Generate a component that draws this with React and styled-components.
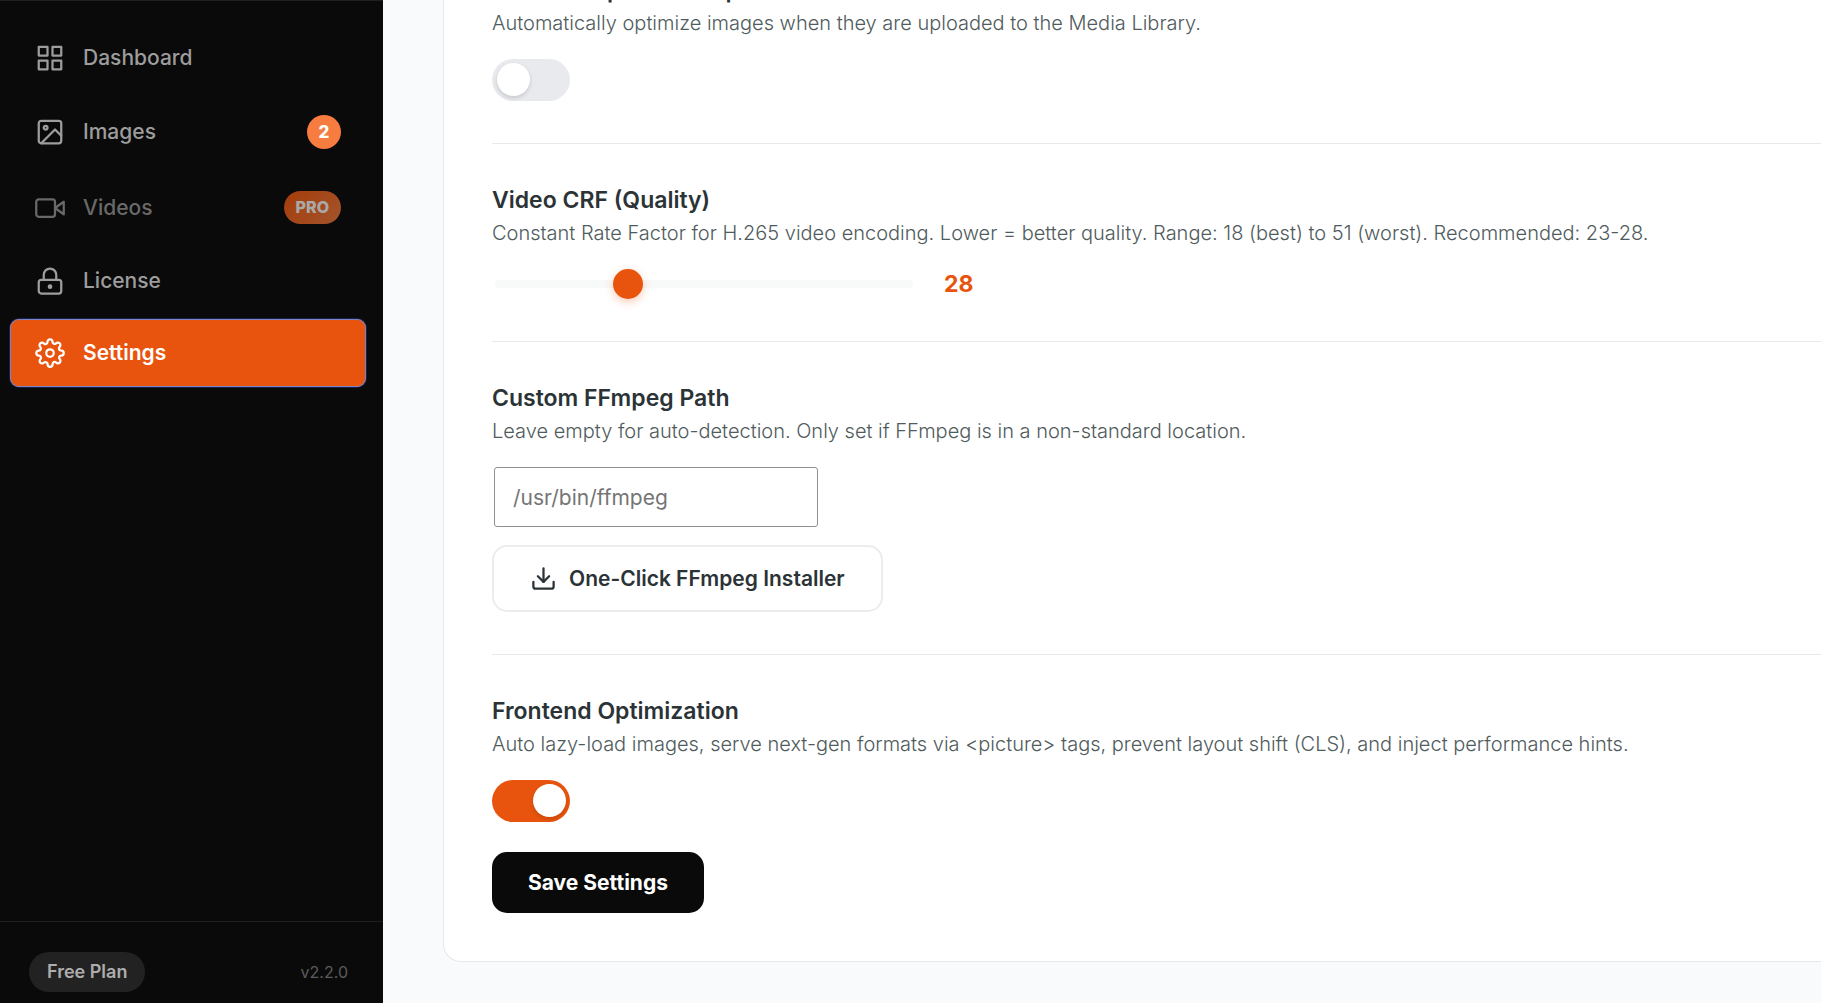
import React, { useState } from "react";
import styled, { createGlobalStyle, css } from "styled-components";
import { FiDownload, FiGrid, FiImage, FiSettings, FiVideo } from "react-icons/fi";

const colors = {
  accent: "#e8540d",
  ink: "#2b3336",
  muted: "#4f5b5c",
  line: "#e7e9ea",
  black: "#0a0a0a",
};

const GlobalStyle = createGlobalStyle`
  * {
    box-sizing: border-box;
  }

  body {
    margin: 0;
    background: #f8fafc;
    color: ${colors.ink};
    font-family: Inter, "Liberation Sans", sans-serif;
  }

  button,
  input {
    font-family: inherit;
  }
`;

const Page = styled.div`
  display: flex;
  min-height: 100vh;
  overflow: hidden;
`;

const Sidebar = styled.aside`
  display: flex;
  flex-direction: column;
  flex: 0 0 383px;
  border-top: 1px solid #1f1f1f;
  background: ${colors.black};
`;

const Nav = styled.nav`
  display: flex;
  flex-direction: column;
  flex: 1;
  gap: 4px;
  padding: 23px 17px 23px 10px;
`;

const NavLink = styled.a`
  display: flex;
  align-items: center;
  gap: 18px;
  padding: 19px 25px;
  border-radius: 9px;
  color: #9d9d9d;
  font-size: 21px;
  font-weight: 500;
  line-height: 30px;
  text-decoration: none;
  opacity: ${(props) => (props.$locked ? 0.65 : 1)};

  svg {
    width: 30px;
    height: 30px;
    stroke-width: 1.8;
  }

  ${(props) =>
    props.$active &&
    css`
      background: ${colors.accent};
      box-shadow: inset 0 0 0 1px #7b83c4, 0 0 0 1px #16204a;
      color: #fff;
      font-weight: 600;
    `}
`;

const Badge = styled.span`
  margin-left: auto;
  border-radius: 17px;
  color: #fff;
  font-weight: 800;
  text-align: center;
`;

const CountBadge = styled(Badge)`
  width: 34px;
  background: #f67c3f;
  font-size: 17px;
  line-height: 34px;
`;

const ProBadge = styled(Badge)`
  padding: 0 12px;
  background: linear-gradient(135deg, #f8580a, #f67c3f);
  font-size: 16px;
  line-height: 33px;
`;

const SidebarFooter = styled.footer`
  display: flex;
  align-items: center;
  justify-content: space-between;
  padding: 30px 35px 11px 29px;
  border-top: 1px solid #1f1f1f;
`;

const Plan = styled.span`
  padding: 0 18px;
  border-radius: 20px;
  background: #222;
  color: #adadad;
  font-size: 18px;
  font-weight: 600;
  line-height: 40px;
`;

const Version = styled.span`
  color: #5c5c5c;
  font-size: 16px;
`;

const Main = styled.main`
  flex: 1;
  min-width: 0;
  padding: 0 0 41px 60px;
`;

const Card = styled.form`
  padding: 0 0 48px 48px;
  border: solid ${colors.line};
  border-width: 0 0 1px 1px;
  border-bottom-left-radius: 18px;
  background: #fff;
`;

const Setting = styled.section`
  padding: 40px 0 42px;
  border-bottom: 1px solid ${colors.line};

  /* the first setting is scrolled partly out of view */
  &:first-child {
    margin-top: -26px;
    padding-top: 0;
  }

  &:last-of-type {
    padding-bottom: 30px;
    border-bottom: 0;
  }
`;

const Title = styled.label`
  display: block;
  font-size: 23px;
  font-weight: 600;
  line-height: 32px;
`;

const Description = styled.p`
  margin: 0 0 19px;
  color: ${colors.muted};
  font-size: 20px;
  font-weight: 300;
  line-height: 34px;
`;

const Switch = styled.input`
  display: block;
  appearance: none;
  width: 78px;
  height: 42px;
  margin: 0;
  padding: 4px 4px 4px 5px;
  border-radius: 21px;
  background: #e8eaed;
  cursor: pointer;

  &::before {
    content: "";
    display: block;
    width: 33px;
    height: 33px;
    border-radius: 50%;
    background: #fff;
    box-shadow: 0 2px 4px rgba(0, 0, 0, 0.15);
  }

  &:checked {
    background: ${colors.accent};
  }

  &:checked::before {
    margin-left: auto;
  }
`;

const SliderRow = styled.div`
  display: flex;
  align-items: center;
  gap: 31px;
`;

const Slider = styled.input`
  appearance: none;
  width: 418px;
  height: 8px;
  margin: 0 0 0 3px;
  border-radius: 4px;
  background: #f8f9f9;

  &::-webkit-slider-thumb {
    appearance: none;
    width: 30px;
    height: 30px;
    border-radius: 50%;
    background: ${colors.accent};
    box-shadow: 0 3px 9px rgba(232, 84, 13, 0.3);
  }
`;

const SliderValue = styled.output`
  color: ${colors.accent};
  font-size: 23px;
  font-weight: 700;
  line-height: 30px;
`;

const PathField = styled.input`
  display: block;
  width: 324px;
  height: 60px;
  margin: 0 2px 18px;
  padding: 0 18px;
  border: 1px solid #8f9294;
  border-radius: 3px;
  background: #fff;
  font-size: 21px;

  &::placeholder {
    color: #757575;
    opacity: 1;
  }
`;

const Button = styled.button`
  display: flex;
  align-items: center;
  gap: 12px;
  border-radius: 15px;
  font-size: 21px;
  font-weight: 600;
  cursor: pointer;
`;

const InstallButton = styled(Button)`
  height: 67px;
  padding: 0 36px;
  border: 2px solid #ececee;
  background: #fff;
  color: ${colors.ink};
`;

const SaveButton = styled(Button)`
  height: 61px;
  padding: 0 36px;
  border: 0;
  background: ${colors.black};
  color: #fff;
  font-weight: 700;
`;

const LockIcon = () => (
  <svg viewBox="0 0 24 24" fill="none" stroke="currentColor" strokeLinecap="round" strokeLinejoin="round">
    <rect x="3" y="11" width="18" height="11" rx="2" />
    <path d="M7 11V7a5 5 0 0 1 10 0v4" />
    <circle cx="12" cy="16.5" r="1" fill="currentColor" />
  </svg>
);

const navItems = [
  { label: "Dashboard", icon: FiGrid },
  { label: "Images", icon: FiImage, count: 2 },
  { label: "Videos", icon: FiVideo, locked: true },
  { label: "License", icon: LockIcon },
  { label: "Settings", icon: FiSettings, active: true },
];

const App = () => {
  const [autoCompress, setAutoCompress] = useState(false);
  const [frontend, setFrontend] = useState(true);
  const [crf, setCrf] = useState(28);
  const [path, setPath] = useState("");

  return (
    <Page>
      <GlobalStyle />
      <Sidebar>
        <Nav>
          {navItems.map(({ label, icon: Icon, count, locked, active }) => (
            <NavLink
              key={label}
              href={`#${label.toLowerCase()}`}
              aria-current={active ? "page" : undefined}
              $active={active}
              $locked={locked}
            >
              <Icon />
              {label}
              {count && <CountBadge>{count}</CountBadge>}
              {locked && <ProBadge>PRO</ProBadge>}
            </NavLink>
          ))}
        </Nav>
        <SidebarFooter>
          <Plan>Free Plan</Plan>
          <Version>v2.2.0</Version>
        </SidebarFooter>
      </Sidebar>

      <Main>
        <Card onSubmit={(e) => e.preventDefault()}>
          <Setting>
            <Title htmlFor="auto-compress">Auto-Compress on Upload</Title>
            <Description>Automatically optimize images when they are uploaded to the Media Library.</Description>
            <Switch
              id="auto-compress"
              type="checkbox"
              checked={autoCompress}
              onChange={(e) => setAutoCompress(e.target.checked)}
            />
          </Setting>

          <Setting>
            <Title htmlFor="video-crf">Video CRF (Quality)</Title>
            <Description>
              Constant Rate Factor for H.265 video encoding. Lower = better quality. Range: 18 (best) to 51 (worst).
              Recommended: 23-28.
            </Description>
            <SliderRow>
              <Slider
                id="video-crf"
                type="range"
                min="18"
                max="51"
                value={crf}
                onChange={(e) => setCrf(e.target.value)}
              />
              <SliderValue htmlFor="video-crf">{crf}</SliderValue>
            </SliderRow>
          </Setting>

          <Setting>
            <Title htmlFor="ffmpeg-path">Custom FFmpeg Path</Title>
            <Description>Leave empty for auto-detection. Only set if FFmpeg is in a non-standard location.</Description>
            <PathField
              id="ffmpeg-path"
              type="text"
              placeholder="/usr/bin/ffmpeg"
              value={path}
              onChange={(e) => setPath(e.target.value)}
            />
            <InstallButton type="button">
              <FiDownload size={27} />
              One-Click FFmpeg Installer
            </InstallButton>
          </Setting>

          <Setting>
            <Title htmlFor="frontend">Frontend Optimization</Title>
            <Description>
              Auto lazy-load images, serve next-gen formats via &lt;picture&gt; tags, prevent layout shift (CLS), and
              inject performance hints.
            </Description>
            <Switch
              id="frontend"
              type="checkbox"
              checked={frontend}
              onChange={(e) => setFrontend(e.target.checked)}
            />
          </Setting>

          <SaveButton type="submit">Save Settings</SaveButton>
        </Card>
      </Main>
    </Page>
  );
};

export default App;
